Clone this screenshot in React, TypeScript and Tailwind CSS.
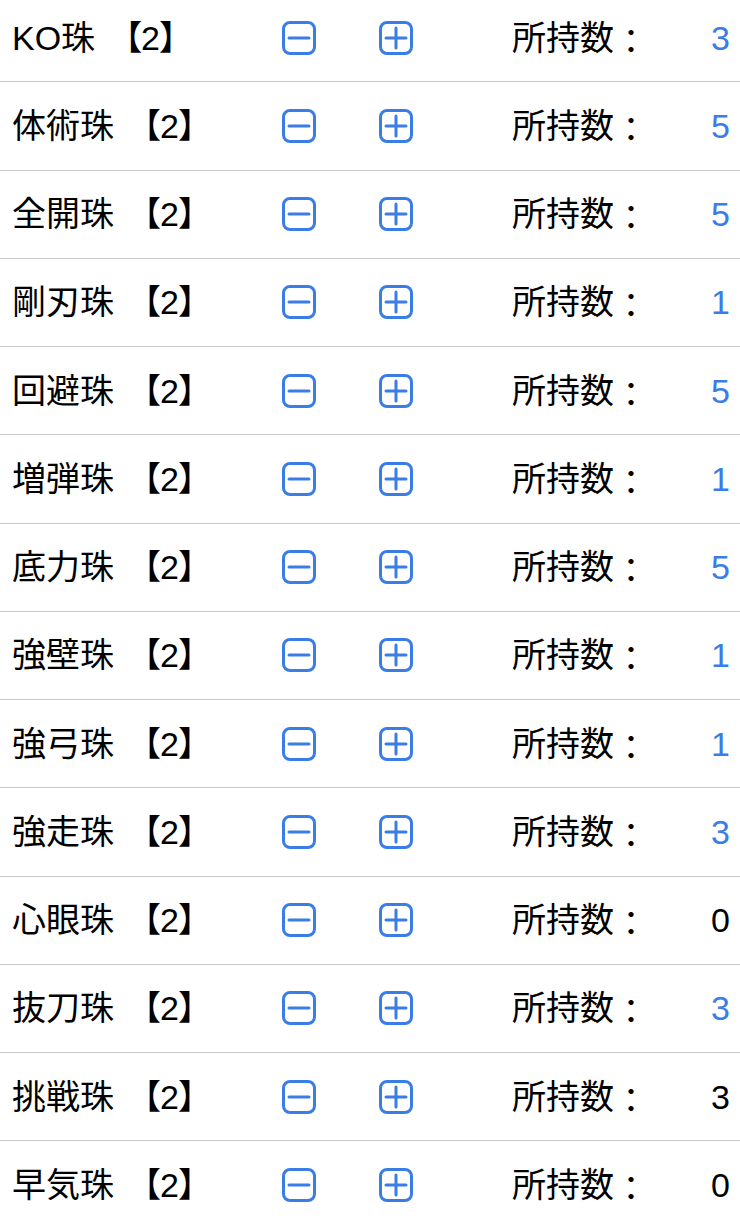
import React from "react";

type Jewel = {
    name: string;
    count: number;
    highlight: boolean;
};

const jewels: Jewel[] = [
    { name: "KO珠", count: 3, highlight: true },
    { name: "体術珠", count: 5, highlight: true },
    { name: "全開珠", count: 5, highlight: true },
    { name: "剛刃珠", count: 1, highlight: true },
    { name: "回避珠", count: 5, highlight: true },
    { name: "増弾珠", count: 1, highlight: true },
    { name: "底力珠", count: 5, highlight: true },
    { name: "強壁珠", count: 1, highlight: true },
    { name: "強弓珠", count: 1, highlight: true },
    { name: "強走珠", count: 3, highlight: true },
    { name: "心眼珠", count: 0, highlight: false },
    { name: "抜刀珠", count: 3, highlight: true },
    { name: "挑戦珠", count: 3, highlight: false },
    { name: "早気珠", count: 0, highlight: false },
];

function SquareIcon({ plus }: { plus?: boolean }) {
    return (
        <svg width="34" height="34" viewBox="0 0 34 34" fill="none" stroke="#3a7de6" strokeWidth="3" strokeLinecap="round">
            <rect x="1.5" y="1.5" width="31" height="31" rx="6.5" />
            <line x1="7" y1="17" x2="27" y2="17" />
            {plus && <line x1="17" y1="7" x2="17" y2="27" />}
        </svg>
    );
}

function App() {
    return (
        <div
            lang="ja"
            className="w-[740px] h-[1216px] overflow-hidden bg-white text-black"
            style={{ fontFamily: '"Liberation Sans", "Noto Sans CJK JP", sans-serif' }}
        >
            <ul className="-mt-[6px]">
                {jewels.map((j) => (
                    <li
                        key={j.name}
                        className="h-[88.25px] flex items-center pl-[12px] pr-[10px] border-b border-[#c8c7cc] text-[34px] leading-none"
                    >
                        {/* 名前 */}
                        <span className="w-[270px] whitespace-nowrap">
                            {j.name}
                            <span className="ml-[13px] tracking-[-1px]">【2】</span>
                        </span>

                        {/* ボタン */}
                        <button type="button" className="block">
                            <SquareIcon />
                        </button>
                        <button type="button" className="block ml-[63px]">
                            <SquareIcon plus />
                        </button>

                        {/* 所持数 */}
                        <span className="ml-[99px] whitespace-nowrap">
                            所持数<span className="inline-block translate-y-[4px]">：</span>
                        </span>
                        <span className={`ml-auto ${j.highlight ? "text-[#3a7de6]" : "text-black"}`}>
                            {j.count}
                        </span>
                    </li>
                ))}
            </ul>
        </div>
    );
}

export default App;
